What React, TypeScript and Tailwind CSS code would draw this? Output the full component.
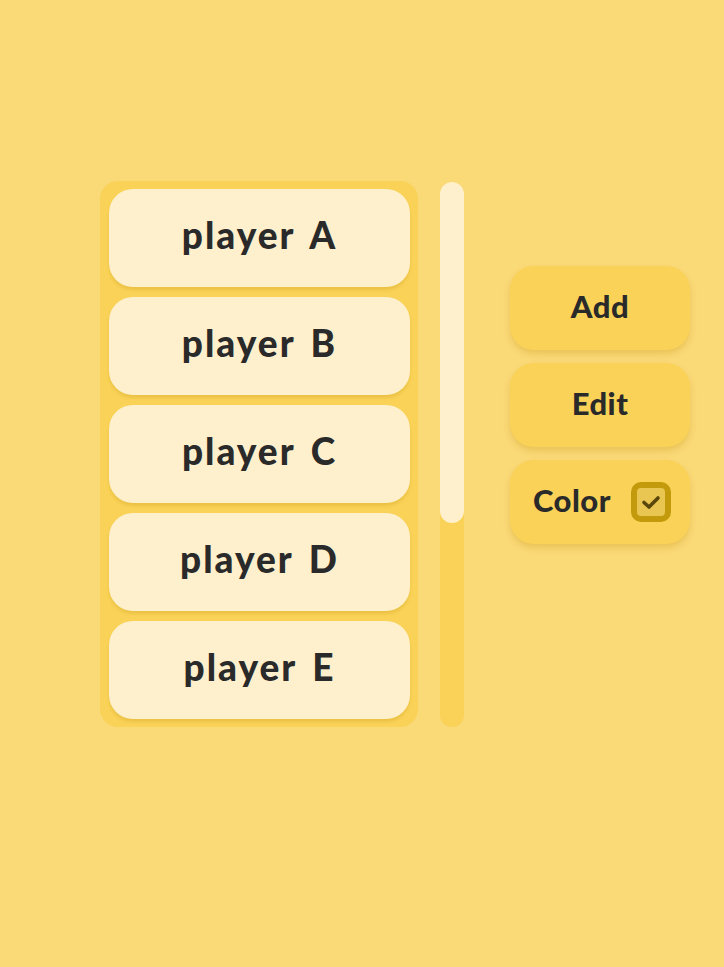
import React from "react";

const players = ["player A", "player B", "player C", "player D", "player E"];

export default function App() {
  return (
    <div
      className="min-h-[967px] w-full bg-[#fad977] flex items-start pl-[100px] pt-[181px]"
      style={{ fontFamily: "Lato, 'Open Sans', sans-serif" }}
    >
      <div className="w-[318px] h-[546px] rounded-[18px] bg-[#f9d257] px-[9px] py-[8px] flex flex-col gap-[10px]">
        {players.map((p) => (
          <div
            key={p}
            className="h-[98px] w-[301px] shrink-0 rounded-[24px] bg-[#fef0cc] shadow-[0_3px_3px_rgba(200,150,20,0.25)] flex items-center justify-center pb-[7px] text-[37px] font-black tracking-[2px] [word-spacing:5px] text-[#2a2a2a]"
          >
            {p}
          </div>
        ))}
      </div>
      <div className="ml-[22px] mt-px w-[24px] h-[545px] rounded-full bg-[#f9d257] flex flex-col">
        <div className="h-[341px] w-full rounded-full bg-[#fef0cc]" />
      </div>
      <div className="ml-[46px] mt-[85px] w-[180px] flex flex-col gap-[13px]">
        <div className="h-[84px] rounded-[24px] bg-[#f9d257] shadow-[0_4px_6px_rgba(200,150,20,0.3)] flex items-center justify-center pb-[3px] text-[31px] font-black tracking-[0.5px] text-[#2a2a2a]">
          Add
        </div>
        <div className="h-[84px] rounded-[24px] bg-[#f9d257] shadow-[0_4px_6px_rgba(200,150,20,0.3)] flex items-center justify-center pb-[3px] text-[31px] font-black tracking-[0.5px] text-[#2a2a2a]">
          Edit
        </div>
        <div className="h-[84px] rounded-[24px] bg-[#f9d257] shadow-[0_4px_6px_rgba(200,150,20,0.3)] flex items-center justify-between pl-[23px] pr-[19px] text-[31px] font-black tracking-[0.5px] text-[#2a2a2a]">
          <span className="pb-[3px]">Color</span>
          <div className="w-[40px] h-[40px] rounded-[10px] border-[6px] border-[#c39a0c] bg-[#e9c551] flex items-center justify-center">
            <svg width="20" height="16" viewBox="0 0 20 16" fill="none">
              <path d="M3 8.5 L8 13 L17 4" stroke="#5a470c" strokeWidth="3.6" strokeLinecap="round" strokeLinejoin="round" />
            </svg>
          </div>
        </div>
      </div>
    </div>
  );
}
